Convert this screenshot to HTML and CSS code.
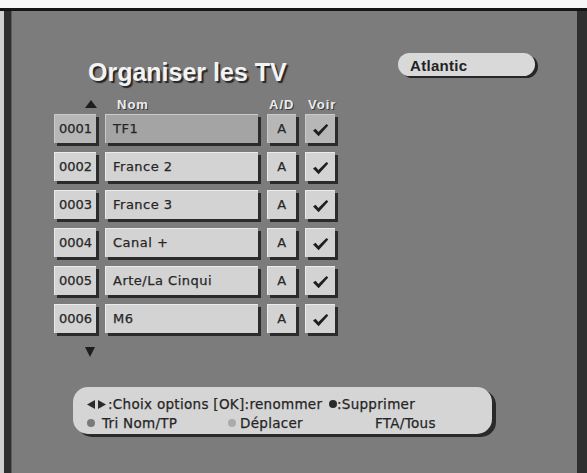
FILE: index.html
```html
<!DOCTYPE html>
<html lang="fr">
<head>
<meta charset="utf-8">
<title>Organiser les TV</title>
<link rel="stylesheet" href="styles.css">
</head>
<body>
<div class="screen">
  <div class="topband"></div>
  <div class="frame">
    <div class="edge-left"></div>
    <div class="main">
      <header class="head">
        <h1 class="title">Organiser les TV</h1>
        <div class="pill">Atlantic</div>
      </header>

      <div class="colhead">
        <div class="hcell hc-arrow"><span class="tri-up"></span></div>
        <div class="hcell hc-nom">Nom</div>
        <div class="hcell hc-ad">A/D</div>
        <div class="hcell hc-voir">Voir</div>
      </div>

      <div class="rows">
        <div class="row sel">
          <div class="cell num">0001</div>
          <div class="cell name">TF1</div>
          <div class="cell ad">A</div>
          <div class="cell voir"><svg class="check" viewBox="0 0 17 14" width="17" height="14"><polygon points="1,7.6 3.6,5.8 6.4,8.9 14.5,0.9 16.3,2.6 6.6,13.2"/></svg></div>
        </div>
        <div class="row">
          <div class="cell num">0002</div>
          <div class="cell name">France 2</div>
          <div class="cell ad">A</div>
          <div class="cell voir"><svg class="check" viewBox="0 0 17 14" width="17" height="14"><polygon points="1,7.6 3.6,5.8 6.4,8.9 14.5,0.9 16.3,2.6 6.6,13.2"/></svg></div>
        </div>
        <div class="row">
          <div class="cell num">0003</div>
          <div class="cell name">France 3</div>
          <div class="cell ad">A</div>
          <div class="cell voir"><svg class="check" viewBox="0 0 17 14" width="17" height="14"><polygon points="1,7.6 3.6,5.8 6.4,8.9 14.5,0.9 16.3,2.6 6.6,13.2"/></svg></div>
        </div>
        <div class="row">
          <div class="cell num">0004</div>
          <div class="cell name">Canal +</div>
          <div class="cell ad">A</div>
          <div class="cell voir"><svg class="check" viewBox="0 0 17 14" width="17" height="14"><polygon points="1,7.6 3.6,5.8 6.4,8.9 14.5,0.9 16.3,2.6 6.6,13.2"/></svg></div>
        </div>
        <div class="row">
          <div class="cell num">0005</div>
          <div class="cell name">Arte/La Cinqui</div>
          <div class="cell ad">A</div>
          <div class="cell voir"><svg class="check" viewBox="0 0 17 14" width="17" height="14"><polygon points="1,7.6 3.6,5.8 6.4,8.9 14.5,0.9 16.3,2.6 6.6,13.2"/></svg></div>
        </div>
        <div class="row">
          <div class="cell num">0006</div>
          <div class="cell name">M6</div>
          <div class="cell ad">A</div>
          <div class="cell voir"><svg class="check" viewBox="0 0 17 14" width="17" height="14"><polygon points="1,7.6 3.6,5.8 6.4,8.9 14.5,0.9 16.3,2.6 6.6,13.2"/></svg></div>
        </div>
      </div>

      <div class="down"><span class="tri-down"></span></div>

      <div class="help">
        <div class="line"><svg class="lr" viewBox="0 0 20 9" width="20" height="9"><polygon points="0,4.5 8,0 8,9"/><polygon points="11,0 19,4.5 11,9"/></svg>:Choix options [OK]:renommer <span class="dot dot-dark"></span>:Supprimer</div>
        <div class="line line2">
          <span class="item item1"><span class="dot dot-red"></span>Tri Nom/TP</span>
          <span class="item item2"><span class="dot dot-green"></span>Déplacer</span>
          <span class="item item3">FTA/Tous</span>
        </div>
      </div>
    </div>
    <div class="edge-right"></div>
  </div>
</div>
</body>
</html>
```

FILE: styles.css
```css
* { box-sizing: border-box; margin: 0; padding: 0; }

html, body {
  width: 587px;
  height: 473px;
  overflow: hidden;
  background: #7c7c7c;
}

body {
  font-family: "DejaVu Sans", sans-serif;
}

.screen {
  width: 587px;
  height: 473px;
  display: flex;
  flex-direction: column;
}

.topband {
  flex: none;
  height: 8px;
  background: #f6f6f6;
}

.frame {
  flex: 1;
  display: flex;
  border-top: 3px solid #141414;
}

.edge-left {
  flex: none;
  width: 12px;
  background: linear-gradient(to right, #cfcfcf 0 4px, #2e2e2e 4px 11px, #5c5c5c 11px);
}

.edge-right {
  flex: none;
  width: 10px;
  background: #2f2f2f;
}

.main {
  flex: 1;
  display: flex;
  flex-direction: column;
  background: #7c7c7c;
}

/* header */
.head {
  display: flex;
  align-items: flex-start;
  padding: 42px 42px 0 76px;
}

.title {
  margin-top: 4px;
  font: bold 25px/30px "Liberation Sans", Arial, sans-serif;
  color: #f3f3f3;
  text-shadow: 2px 2px 1px #262626;
  white-space: nowrap;
}

.pill {
  margin-left: auto;
  width: 137px;
  height: 23px;
  padding: 1px 0 0 12px;
  border-radius: 12px;
  background: #d9d9d9;
  box-shadow: 3px 2px 0 #262626;
  font: bold 15px/23px "Liberation Sans", Arial, sans-serif;
  letter-spacing: 0.3px;
  color: #222;
}

/* column header */
.colhead {
  display: grid;
  grid-template-columns: 42px 153px 29px 30px;
  column-gap: 9px;
  height: 14px;
  margin: 11px 0 0 42px;
  font: bold 13px/14px "Liberation Sans", Arial, sans-serif;
  letter-spacing: 1px;
  color: #ececec;
  text-shadow: 1px 1px 0 #3a3a3a;
  white-space: nowrap;
}

.hc-arrow { padding: 2px 0 0 31px; }
.hc-nom { padding-left: 12px; }
.hc-ad { padding-left: 2px; }
.hc-voir { padding-left: 3px; }

.tri-up {
  display: block;
  width: 0;
  height: 0;
  border-left: 6px solid transparent;
  border-right: 6px solid transparent;
  border-bottom: 8px solid #1e1e1e;
}

/* rows */
.rows {
  display: flex;
  flex-direction: column;
  gap: 9px;
  margin: 2px 0 0 42px;
}

.row {
  display: grid;
  grid-template-columns: 42px 153px 29px 30px;
  column-gap: 9px;
  height: 29px;
}

.cell {
  background: #d3d3d3;
  border-top: 1px solid #ebebeb;
  border-left: 1px solid #ebebeb;
  box-shadow: 3px 3px 0 #2b2b2b;
  color: #262626;
  font-size: 13px;
  line-height: 27px;
  letter-spacing: 0.5px;
  -webkit-text-stroke: 0.25px #262626;
  white-space: nowrap;
}

.num { text-align: center; letter-spacing: 0; }
.name { padding-left: 7px; }
.ad { text-align: center; }
.voir {
  display: flex;
  align-items: center;
  justify-content: center;
  padding-top: 1px;
}

.check { display: block; fill: #1f1f1f; }

.row.sel .cell { background: #b7b7b7; border-color: #cacaca; }
.row.sel .name { background: #a4a4a4; }

.down {
  margin: 14px 0 0 73px;
}

.tri-down {
  display: block;
  width: 0;
  height: 0;
  border-left: 5px solid transparent;
  border-right: 5px solid transparent;
  border-top: 10px solid #1e1e1e;
}

/* help panel */
.help {
  margin: 30px 0 0 61px;
  width: 419px;
  height: 47px;
  padding: 8px 0 0 14px;
  border-radius: 15px;
  background: #d5d5d5;
  box-shadow: 4px 3px 0 #2a2a2a;
  color: #262626;
  font-size: 13.5px;
  line-height: 19px;
  letter-spacing: 0.3px;
  -webkit-text-stroke: 0.25px #262626;
  white-space: nowrap;
}

.lr {
  display: inline-block;
  vertical-align: 0;
  fill: #2a2a2a;
  margin-right: 1px;
}

.dot {
  display: inline-block;
  width: 8px;
  height: 8px;
  border-radius: 50%;
  vertical-align: 1px;
}

.dot-dark { background: #2a2a2a; margin-left: 2px; }
.dot-red { background: #7a7a7a; margin-right: 7px; }
.dot-green { background: #ababab; margin-right: 4px; }

.line2 { display: flex; }
.item { display: block; }
.item1 { width: 141px; }
.item2 { width: 147px; }
```
